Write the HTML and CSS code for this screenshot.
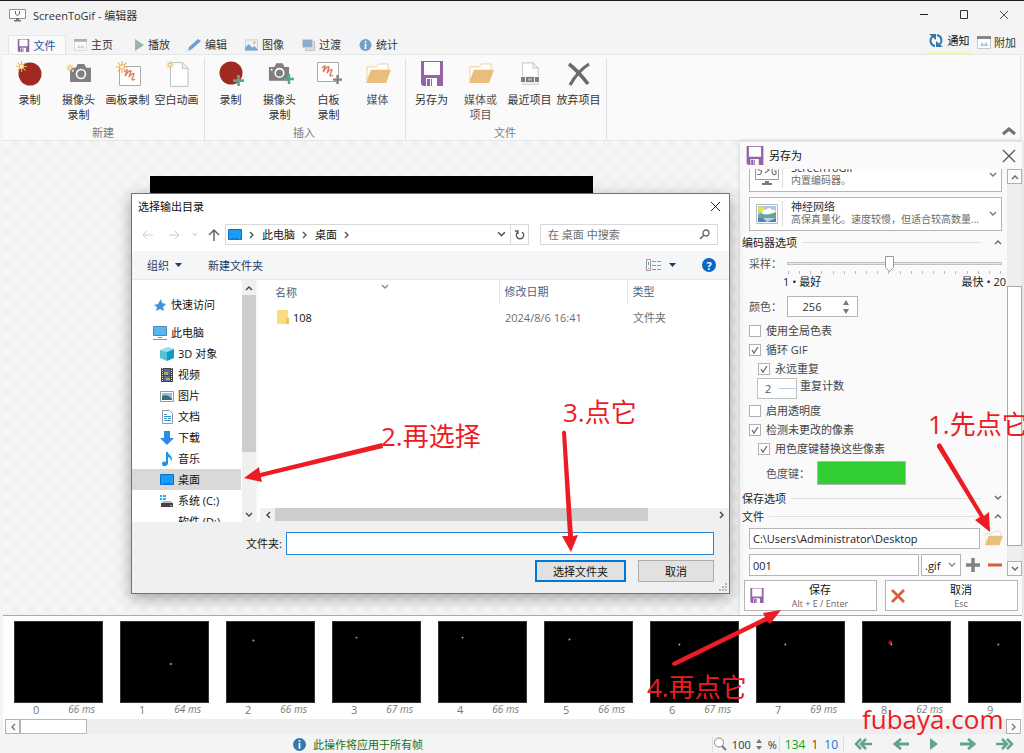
FILE: index.html
```html
<!DOCTYPE html>
<html lang="zh-CN">
<head>
<meta charset="utf-8">
<title>ScreenToGif - 编辑器</title>
<meta name="viewport" content="width=device-width, initial-scale=1">
<link rel="stylesheet" href="styles.css">
</head>
<body>
<svg class="defs" width="0" height="0" aria-hidden="true">
  <symbol id="floppy" viewBox="0 0 22 25"><path fill="#9263a9" d="M0 0h22v25H2l-2-2z"/><path fill="#fdfdfd" d="M3 1h16v13H3zM5 17h11v8H5z"/><path fill="#9263a9" d="M6 18h3v7H6zM10 18h1v7h-1z"/></symbol>
  <symbol id="rec" viewBox="0 0 28 28"><circle cx="14" cy="14" r="11.5" fill="#a02922"/></symbol>
  <symbol id="spark" viewBox="0 0 12 12"><g stroke="#e5b765" stroke-width="1.2"><path d="M6 0v12M0 6h12M1.7 1.7l8.6 8.6M10.3 1.7l-8.6 8.6"/></g><circle cx="6" cy="6" r="2.4" fill="#fff3cf" stroke="#e5b765"/></symbol>
  <symbol id="camera" viewBox="0 0 24 20"><path fill="#7f7f7f" d="M1 4h6l2-4h7l2 4h5v15H1z"/><circle cx="12.500" cy="10.500" r="4.700" fill="#7f7f7f" stroke="#fff" stroke-width="1.700"/><path fill="#fff" d="M3 6h2v2H3z"/></symbol>
  <symbol id="board" viewBox="0 0 22 20"><path fill="#fff" stroke="#aaa" d="M.5.5h21v19H.5z"/><path fill="none" stroke="#dc7458" stroke-width="1.300" d="M5 6q4-4 3-1L6 10q5-7 6-5l-2 6q4-5 5-3l-2 5q0 2 3 0"/></symbol>
  <symbol id="page" viewBox="0 0 20 26"><path fill="#fff" stroke="#bbb" d="M.5.5H13l6 6v19H.5zM13 .5v6h6"/></symbol>
  <symbol id="folder" viewBox="0 0 26 22"><path fill="#fff" stroke="#efcf9d" d="M1 18V4h10l2-3h10v6"/><path fill="#e9bd7c" d="M5 7h21l-5 14H0z"/></symbol>
  <symbol id="plus" viewBox="0 0 12 12"><path d="M6 0v12M0 6h12" stroke="currentColor" stroke-width="3"/></symbol>
  <symbol id="down" viewBox="0 0 8 6"><path d="M1 1l3 3 3-3" fill="none" stroke="currentColor" stroke-width="1.400"/></symbol>
  <symbol id="up" viewBox="0 0 8 6"><path d="M1 5l3-3 3 3" fill="none" stroke="currentColor" stroke-width="1.400"/></symbol>
  <symbol id="left" viewBox="0 0 6 8"><path d="M5 1L2 4l3 3" fill="none" stroke="currentColor" stroke-width="1.400"/></symbol>
  <symbol id="right" viewBox="0 0 6 8"><path d="M1 1l3 3-3 3" fill="none" stroke="currentColor" stroke-width="1.400"/></symbol>
  <symbol id="close" viewBox="0 0 12 12"><path d="M1 1l10 10M11 1L1 11" fill="none" stroke="currentColor"/></symbol>
  <symbol id="info" viewBox="0 0 12 12"><circle cx="6" cy="6" r="6" fill="currentColor"/><path fill="#fff" d="M5.200 2h1.600v1.600H5.200zM5.200 4.500h1.600V10H5.200z"/></symbol>
  <symbol id="desk" viewBox="0 0 14 12"><path fill="#1a9bf5" stroke="#0b72c4" d="M.5.5h13v10H.5z"/><path fill="#0a7ad8" d="M1 9h12v2H1z"/><path fill="#54bdff" d="M2 9h1v1H2zM11 9h1v1h-1z"/></symbol>
  <symbol id="arrow" viewBox="0 0 16 12"><path d="M0 6h13M8 1l6 5-6 5" fill="none" stroke="currentColor" stroke-width="2.800"/></symbol>
  <symbol id="photo" viewBox="0 0 14 12"><path fill="#eaf3fa" stroke="#ccc" d="M.5.5h13v11H.5z"/><path fill="#79a7d0" d="M0 9l4-4 4 4 2-2 4 4v1H0z"/><circle cx="10" cy="3.500" r="1.500" fill="#e8c06c"/></symbol>
  <symbol id="window" viewBox="0 0 14 13"><path fill="#fff" stroke="#c8c8c8" d="M.5.5h13v12H.5z"/><path fill="#848484" d="M0 0h14v3H0z"/><path fill="#a9cbe6" d="M3 10l2-4 2 3 2-3 3 4z"/></symbol>
</svg>

<div class="app">
  <header class="titlebar">
    <svg class="logo" width="17" height="13" viewBox="0 0 17 13"><path fill="#fff" stroke="#8d8d8d" d="M.5.5h16v9H.5z"/><path fill="none" stroke="#666" d="M6.500 2v3q2 3 4 0V2"/><path fill="#777" d="M7 9h3v2h2v1.500H5V11h2z"/></svg>
    <span class="app-name">ScreenToGif - 编辑器</span>
    <div class="window-buttons">
      <button aria-label="最小化"><svg width="10" height="10"><path d="M1 4.500h8" stroke="#222"/></svg></button>
      <button aria-label="最大化"><svg width="10" height="10"><path fill="none" stroke="#333" d="M1.500.5h7v8h-7z"/></svg></button>
      <button aria-label="关闭"><svg width="10" height="10"><use href="#close"/></svg></button>
    </div>
  </header>

  <nav class="tabs">
    <button class="tab active"><svg width="13" height="13"><use href="#floppy"/></svg>文件</button>
    <button class="tab"><svg width="13" height="12" opacity=".6"><use href="#window"/></svg>主页</button>
    <button class="tab"><svg width="13" height="12" viewBox="0 0 13 12"><path fill="#94b9a9" d="M4 0l9 6-9 6z"/></svg>播放</button>
    <button class="tab"><svg width="13" height="12" viewBox="0 0 13 12"><path fill="#72a0cb" d="M10 0l3 2-9 8-4 2 1-4z"/></svg>编辑</button>
    <button class="tab"><svg width="13" height="12"><use href="#photo"/></svg>图像</button>
    <button class="tab"><svg width="13" height="12" viewBox="0 0 13 12"><path fill="#dedede" stroke="#c2c2c2" d="M3.500 2.500h9v9h-9z"/><path fill="#8aaed1" stroke="#d2d2d2" d="M.5.5h10v8H.5z"/></svg>过渡</button>
    <button class="tab tab-info"><svg width="13" height="12"><use href="#info"/></svg>统计</button>
    <div class="tabs-extra">
      <button class="notice"><svg width="14" height="15" viewBox="0 0 14 15"><g fill="none" stroke="#3277b0" stroke-width="2"><path d="M6 13C1 12 0 6 4 3M8 2c5 1 6 7 2 10"/></g><path fill="#3277b0" d="M0 1h7v6zM14 14H7V8z"/></svg>通知</button>
      <button class="extras"><svg width="14" height="13"><use href="#window"/></svg>附加</button>
    </div>
  </nav>

  <section class="ribbon">
    <div class="group">
      <div class="items">
        <button class="item"><svg width="28" height="28" viewBox="0 0 28 28"><use href="#rec" width="28" height="28"/><use href="#spark" y="1" width="11" height="11"/></svg>录制</button>
        <button class="item"><svg width="28" height="28" viewBox="0 0 28 28"><use href="#camera" x="4" y="4" width="23" height="19"/><use href="#spark" x="1" y="4" width="8" height="8"/></svg>摄像头<br>录制</button>
        <button class="item"><svg width="28" height="28" viewBox="0 0 28 28"><use href="#board" x="5" y="6" width="22" height="20"/><use href="#spark" x="2" y="1" width="12" height="12"/></svg>画板录制</button>
        <button class="item"><svg width="28" height="28" viewBox="0 0 28 28"><use href="#page" x="7" y="2" width="19" height="25"/><use href="#spark" x="3" y="1" width="8" height="8"/></svg>空白动画</button>
      </div>
      <div class="group-name">新建</div>
    </div>
    <div class="group">
      <div class="items">
        <button class="item"><svg width="28" height="28" viewBox="0 0 28 28"><use href="#rec" y="-1" width="28" height="28"/><use class="green" href="#plus" x="16" y="15" width="11" height="11"/></svg>录制</button>
        <button class="item"><svg width="28" height="28" viewBox="0 0 28 28"><use href="#camera" x="2" y="3" width="22" height="19"/><use class="green" href="#plus" x="18" y="14" width="10" height="10"/></svg>摄像头<br>录制</button>
        <button class="item"><svg width="28" height="28" viewBox="0 0 28 28"><use href="#board" x="2" y="2" width="22" height="20"/><use class="gray" href="#plus" x="18" y="15" width="9" height="9"/></svg>白板<br>录制</button>
        <button class="item soft"><svg width="28" height="28" viewBox="0 0 28 28"><use href="#folder" x="2" y="3" width="25" height="21"/></svg>媒体</button>
      </div>
      <div class="group-name">插入</div>
    </div>
    <div class="group">
      <div class="items">
        <button class="item"><svg width="28" height="28" viewBox="0 0 28 28"><use href="#floppy" x="3" y="1" width="22" height="25"/></svg>另存为</button>
        <button class="item soft"><svg width="28" height="28" viewBox="0 0 28 28"><use href="#folder" x="2" y="3" width="25" height="21"/></svg>媒体或<br>项目</button>
        <button class="item"><svg width="28" height="28" viewBox="0 0 28 28"><use href="#page" x="6" y="1" width="17" height="25"/><path fill="#fafafa" d="M5 16h19v7H5z"/><path fill="#7d7d7d" d="M5 17h18v5H5z"/><path fill="#7d7d7d" stroke="#eee" d="M9.500 16.500h9v6h-9z"/><path fill="#bbb" d="M12 18.500h4v2h-4z"/></svg>最近项目</button>
        <button class="item"><svg width="28" height="28" viewBox="0 0 28 28"><path fill="none" stroke="#6b6b6b" stroke-width="3.500" d="M4 4q9 7 19 20"/><path fill="none" stroke="#6b6b6b" stroke-width="3.200" d="M24 4Q13 11 5 25"/></svg>放弃项目</button>
      </div>
      <div class="group-name">文件</div>
    </div>
    <button class="collapse" aria-label="折叠功能区"><svg width="14" height="10" viewBox="0 0 14 10"><path d="M1 8l6-5 6 5" fill="none" stroke="#727272" stroke-width="3"/></svg></button>
  </section>

  <main class="workspace">
    <div class="canvas"><div class="frame-view"></div></div>

    <aside class="panel">
      <div class="panel-head">
        <svg width="18" height="19"><use href="#floppy"/></svg><span>另存为</span>
        <button aria-label="关闭"><svg width="14" height="14" viewBox="0 0 14 14"><path d="M1 1l12 12M13 1L1 13" stroke="#555" stroke-width="1.300"/></svg></button>
      </div>
      <div class="panel-body">
        <div class="options">
          <button class="encoder" aria-haspopup="listbox">
            <svg width="26" height="26" viewBox="0 0 26 26"><path fill="#fff" stroke="#999" d="M1.500.5h23v17h-23z"/><path fill="none" stroke="#777" stroke-width="1.200" d="M9 4.500q-5-1-5 1.500t2.500 2.500-.5 4H3M11 5l4 3-4 3M23 5q-5-1-5 4t4 3V9h-2"/><path fill="#777" d="M11 19h4v2h3v2H8v-2h3z"/></svg>
            <span class="encoder-text"><b>ScreenToGif</b><small>内置编码器。</small></span>
            <svg class="chev" width="8" height="6"><use href="#down"/></svg>
          </button>
          <button class="encoder" aria-haspopup="listbox">
            <svg width="26" height="22" viewBox="0 0 26 22"><path fill="#fff" stroke="#bbb" d="M2.500 1.500h21v19h-21z"/><path fill="#a9c9e9" d="M4 3h18v9H4z"/><path fill="#fff" d="M8 10q0-4 4-3 3-4 6 0 4-1 4 4H8z"/><path fill="#6ea38e" d="M4 12q3-3 7 0l5-1 6-2v6H4z"/><path fill="#4e83bd" d="M4 15h18v4H4z"/><path fill="#b4d2ed" d="M9 15h13l-9 4z"/><circle cx="7" cy="6" r="2.700" fill="#e6ef19"/></svg>
            <span class="encoder-text"><b>神经网络</b><small>高保真量化。速度较慢，但适合较高数量...</small></span>
            <svg class="chev" width="8" height="6"><use href="#down"/></svg>
          </button>
          <h2 class="section">编码器选项<svg width="8" height="6"><use href="#up"/></svg></h2>
          <div class="sampling">
            <label for="sampling">采样：</label>
            <div class="slider">
              <input id="sampling" type="range" min="1" max="20" value="10">
              <div class="ticks"><i></i><i></i><i></i><i></i><i></i><i></i><i></i><i></i><i></i><i></i><i></i><i></i><i></i><i></i><i></i><i></i><i></i><i></i><i></i><i></i></div>
              <div class="ends"><span>1 • 最好</span><span>最快 • 20</span></div>
            </div>
          </div>
          <div class="colors">
            <label for="colors">颜色：</label>
            <span class="spinner"><input id="colors" type="text" value="256"><svg width="8" height="14" viewBox="0 0 8 14"><path fill="#7a7a7a" d="M1 5l3-5 3 5zM1 9h6l-3 5z"/></svg></span>
          </div>
          <div class="checks">
            <label><input type="checkbox">使用全局色表</label>
            <label><input type="checkbox" checked>循环 GIF</label>
            <label class="nested"><input type="checkbox" checked>永远重复</label>
          </div>
          <div class="repeat">
            <span class="repeat-box"><input id="repeat" type="text" value="2"></span>
            <label for="repeat">重复计数</label>
          </div>
          <div class="checks">
            <label><input type="checkbox">启用透明度</label>
            <label><input type="checkbox" checked>检测未更改的像素</label>
            <label class="nested"><input type="checkbox" checked>用色度键替换这些像素</label>
          </div>
          <div class="chroma"><span>色度键：</span><button aria-label="色度键颜色"></button></div>
          <h2 class="section">保存选项<svg width="8" height="6"><use href="#down"/></svg></h2>
          <h2 class="section">文件<svg width="8" height="6"><use href="#up"/></svg></h2>
          <div class="path-row">
            <input type="text" aria-label="输出目录" value="C:\Users\Administrator\Desktop">
            <button aria-label="选择输出目录"><svg width="18" height="15" viewBox="0 0 26 22"><use href="#folder" width="26" height="22"/></svg></button>
          </div>
          <div class="name-row">
            <input type="text" aria-label="文件名" value="001">
            <span class="ext"><select aria-label="扩展名"><option>.gif</option></select><svg width="8" height="6"><use href="#down"/></svg></span>
            <button class="gray" aria-label="增加"><svg width="14" height="14"><use href="#plus"/></svg></button>
            <button aria-label="减少"><svg width="14" height="14"><path d="M0 7h14" stroke="#d6603a" stroke-width="3"/></svg></button>
          </div>
        </div>
        <div class="vbar">
          <button aria-label="向上滚动"><svg width="8" height="6"><use href="#up"/></svg></button>
          <div class="vtrack"><div class="vthumb"></div></div>
          <button aria-label="向下滚动"><svg width="8" height="6"><use href="#down"/></svg></button>
        </div>
      </div>
      <div class="actions">
        <button><svg width="14" height="15"><use href="#floppy"/></svg><span>保存<small>Alt + E / Enter</small></span></button>
        <button><svg width="14" height="14" viewBox="0 0 14 14"><path d="M1 1l12 12M13 1L1 13" stroke="#d6603a" stroke-width="2.800"/></svg><span>取消<small>Esc</small></span></button>
      </div>
    </aside>
  </main>

  <section class="film">
    <div class="frames">
      <figure><div class="shot"></div><figcaption><span>0</span><i>66 ms</i></figcaption></figure>
      <figure><div class="shot"><svg viewBox="0 0 89 82"><circle cx="51" cy="43" r="1"/></svg></div><figcaption><span>1</span><i>64 ms</i></figcaption></figure>
      <figure><div class="shot"><svg viewBox="0 0 89 82"><circle cx="27" cy="19" r="1"/></svg></div><figcaption><span>2</span><i>66 ms</i></figcaption></figure>
      <figure><div class="shot"><svg viewBox="0 0 89 82"><circle cx="24" cy="16" r="1"/></svg></div><figcaption><span>3</span><i>67 ms</i></figcaption></figure>
      <figure><div class="shot"><svg viewBox="0 0 89 82"><circle cx="24" cy="16" r="1"/></svg></div><figcaption><span>4</span><i>66 ms</i></figcaption></figure>
      <figure><div class="shot"><svg viewBox="0 0 89 82"><circle cx="25" cy="18" r="1"/></svg></div><figcaption><span>5</span><i>66 ms</i></figcaption></figure>
      <figure><div class="shot"><svg viewBox="0 0 89 82"><circle cx="29" cy="23" r="1"/></svg></div><figcaption><span>6</span><i>67 ms</i></figcaption></figure>
      <figure><div class="shot"><svg viewBox="0 0 89 82"><circle cx="29" cy="23" r="1"/></svg></div><figcaption><span>7</span><i>69 ms</i></figcaption></figure>
      <figure><div class="shot"><svg viewBox="0 0 89 82"><circle class="click" cx="28" cy="21" r="2"/><circle cx="29" cy="23" r="1"/></svg></div><figcaption><span>8</span><i>62 ms</i></figcaption></figure>
      <figure><div class="shot"><svg viewBox="0 0 89 82"><circle cx="30" cy="23" r="1"/></svg></div><figcaption><span>9</span></figcaption></figure>
    </div>
    <div class="hbar">
      <button aria-label="向左滚动"><svg width="6" height="8"><use href="#left"/></svg></button>
      <div class="hthumb"></div>
      <button class="end" aria-label="向右滚动"><svg width="6" height="8"><use href="#right"/></svg></button>
    </div>
  </section>

  <footer class="status">
    <div class="message"><svg width="13" height="13"><use href="#info"/></svg>此操作将应用于所有帧</div>
    <div class="zoom"><svg width="14" height="14" viewBox="0 0 14 14"><circle cx="6" cy="5.500" r="4.500" fill="#fff" stroke="#888"/><path d="M9 9l4 4" stroke="#777" stroke-width="2"/></svg><input type="text" aria-label="缩放" value="100"><svg width="6" height="12" viewBox="0 0 6 12"><path fill="#777" d="M0 5l3-4 3 4zM0 8h6l-3 4z"/></svg><span>%</span></div>
    <div class="counts"><span class="c-all">134</span><span class="c-sel">1</span><span class="c-cur">10</span></div>
    <div class="player">
      <button aria-label="第一帧"><svg width="18" height="12" viewBox="0 0 18 12"><path d="M7 1L2 6l5 5M12 1L7 6l5 5M7 6h11" fill="none" stroke="currentColor" stroke-width="2.500"/></svg></button>
      <button aria-label="上一帧"><svg class="flip" width="16" height="12"><use href="#arrow"/></svg></button>
      <button aria-label="播放"><svg width="10" height="12"><path fill="currentColor" d="M1 0l8 6-8 6z"/></svg></button>
      <button aria-label="下一帧"><svg width="16" height="12"><use href="#arrow"/></svg></button>
      <button aria-label="最后一帧"><svg class="flip" width="18" height="12" viewBox="0 0 18 12"><path d="M7 1L2 6l5 5M12 1L7 6l5 5M7 6h11" fill="none" stroke="currentColor" stroke-width="2.500"/></svg></button>
    </div>
  </footer>

  <div class="dialog" role="dialog" aria-label="选择输出目录">
    <div class="dlg-title"><span>选择输出目录</span><button aria-label="关闭"><svg width="11" height="11"><use href="#close"/></svg></button></div>
    <div class="dlg-nav">
      <div class="history">
        <button aria-label="后退"><svg width="12" height="10"><path d="M11 5H1M5 1L1 5l4 4" fill="none" stroke="#ccc"/></svg></button>
        <button aria-label="前进"><svg width="12" height="10"><path d="M1 5h10M7 1l4 4-4 4" fill="none" stroke="#ccc"/></svg></button>
        <button aria-label="最近位置"><svg width="6" height="5" viewBox="0 0 8 6" color="#ccc"><use href="#down"/></svg></button>
        <button aria-label="上移"><svg width="12" height="12"><path d="M6 12V2M1 6l5-5 5 5" fill="none" stroke="#666" stroke-width="1.500"/></svg></button>
      </div>
      <div class="address">
        <svg width="14" height="12"><use href="#desk"/></svg>
        <svg width="6" height="8"><use href="#right"/></svg><a href="#pc">此电脑</a>
        <svg width="6" height="8"><use href="#right"/></svg><a href="#desktop">桌面</a>
        <svg width="6" height="8"><use href="#right"/></svg>
        <button class="drop" aria-label="历史记录"><svg width="9" height="7"><use href="#down"/></svg></button>
        <button class="refresh" aria-label="刷新"><svg width="10" height="10" viewBox="0 0 10 10"><path d="M7 2a3.700 3.700 0 1 1-4 0M3 4V1H0" fill="none" stroke="#555" stroke-width="1.300"/></svg></button>
      </div>
      <div class="search"><input type="text" aria-label="搜索" placeholder="在 桌面 中搜索"><svg width="11" height="11"><circle cx="7" cy="4" r="3" fill="none" stroke="#666" stroke-width="1.300"/><path d="M5 6l-4 4" stroke="#666" stroke-width="1.600"/></svg></div>
    </div>
    <div class="dlg-tools">
      <button>组织<svg width="7" height="4"><path fill="#1e3a66" d="M0 0h7L3.500 4z"/></svg></button>
      <button>新建文件夹</button>
      <div class="views">
        <button aria-label="视图"><svg width="15" height="12" viewBox="0 0 15 12"><path fill="none" stroke="#999" d="M.5.5h4v11h-4z"/><path stroke="#8c9bb0" stroke-dasharray="4 1" d="M6 2.500h9M6 6.500h9M6 10.500h9"/><path fill="#c77" d="M2 9h1v1H2z"/><path fill="#69c" d="M2 3h1v3H2z"/></svg></button>
        <button aria-label="更多视图"><svg width="7" height="4"><path fill="#1e3a66" d="M0 0h7L3.500 4z"/></svg></button>
        <button class="help" aria-label="帮助">?</button>
      </div>
    </div>
    <div class="dlg-body">
      <ul class="tree">
        <li class="root"><svg width="14" height="14" viewBox="0 0 14 14"><path fill="#3a95de" d="M8 1l1 4 4 1-3 3 1 4-4-2-4 2 1-4-3-2 4-1z"/></svg>快速访问</li>
        <li class="root pc"><svg width="14" height="14" viewBox="0 0 14 14"><path fill="#58b7f0" stroke="#5287ad" d="M.5.5h13v9H.5z"/><path stroke="#7e9cb3" d="M5 11.500h4M0 13.500h14"/></svg>此电脑</li>
        <li><svg width="14" height="14" viewBox="0 0 14 14"><path fill="#8ee0ec" d="M0 3l8-3 6 2-7 3z"/><path fill="#4fc1d8" d="M0 3l7 2v9l-7-3z"/><path fill="#159bc2" d="M7 5l7-3v9l-7 3z"/></svg>3D 对象</li>
        <li><svg width="14" height="14" viewBox="0 0 14 14"><path fill="#444" d="M1 0h12v14H1z"/><path fill="#4470b8" d="M4 1h6v6H4zM4 8h6v5H4z"/><path fill="#d6a13d" d="M4 4h4v3H4zM6 10h4v2H6z"/><path stroke="#ddd" stroke-dasharray="1 1" d="M2.500 0v14M11.500 0v14"/></svg>视频</li>
        <li><svg width="14" height="14" viewBox="0 0 14 14"><path fill="#fff" stroke="#999" d="M.5 2.500h13v10H.5z"/><path fill="#86c4ee" d="M2 4h10v4H2z"/><path fill="#3b6f78" d="M2 7l4-1 6 3v2H2z"/></svg>图片</li>
        <li><svg width="14" height="14" viewBox="0 0 14 14"><path fill="#fff" stroke="#999" d="M2.500.5h7l3 3v10h-10z"/><path stroke="#3c94c9" d="M4 4.500h3M4 6.500h7M4 8.500h3M8 8.500h3M4 10.500h7"/></svg>文档</li>
        <li><svg width="14" height="14" viewBox="0 0 14 14"><path fill="#2f8be0" d="M4 0h6v7h4l-7 7-7-7h4z"/></svg>下载</li>
        <li><svg width="14" height="14" viewBox="0 0 14 14"><path fill="#1c95ed" d="M6 0h2c0 3 4 3 4 7 0 1-1 2-1 2 0-3-2-4-3-4v6c0 4-6 4-6 1 0-2 2-3 4-2z"/></svg>音乐</li>
        <li class="selected"><svg width="14" height="12"><use href="#desk"/></svg>桌面</li>
        <li><svg width="14" height="14" viewBox="0 0 14 14"><path fill="#25b3ee" d="M0 1h2v2H0zM3 1h3v2H3zM0 4h2v2H0zM3 4h3v2H3z"/><path fill="#bbb" d="M3 7h8l2 3H1z"/><path fill="#444" d="M1 9h12v4H1z"/><path fill="#5fdc68" d="M10 11h2v1h-2z"/></svg>系统 (C:)</li>
        <li><svg width="14" height="14"></svg>软件 (D:)</li>
      </ul>
      <div class="tree-bar">
        <button aria-label="向上滚动"><svg width="8" height="6"><use href="#up"/></svg></button>
        <div class="tree-track"><div class="tree-thumb"></div></div>
        <button aria-label="向下滚动"><svg width="8" height="6"><use href="#down"/></svg></button>
      </div>
      <div class="files">
        <table>
          <thead><tr><th class="col-name"><span>名称</span><svg width="8" height="6"><use href="#down"/></svg></th><th class="col-date">修改日期</th><th>类型</th></tr></thead>
          <tbody><tr><td class="name"><svg width="12" height="14" viewBox="0 0 12 14"><path fill="#fbdc80" d="M0 0h11v14H0z"/><path fill="#eac35a" d="M9 8h3v6H9z"/></svg>108</td><td>2024/8/6 16:41</td><td>文件夹</td></tr></tbody>
        </table>
        <div class="files-bar">
          <button aria-label="向左滚动"><svg width="6" height="8"><use href="#left"/></svg></button>
          <div class="files-track"><div class="files-thumb"></div></div>
          <button aria-label="向右滚动"><svg width="6" height="8"><use href="#right"/></svg></button>
        </div>
      </div>
    </div>
    <div class="dlg-foot">
      <div class="folder-row"><label for="folder-name">文件夹:</label><input id="folder-name" type="text"></div>
      <div class="dlg-actions"><button class="primary">选择文件夹</button><button>取消</button></div>
      <svg class="grip" width="8" height="8"><path fill="#b5b5b5" d="M6 0h2v2H6zM3 3h2v2H3zM6 3h2v2H6zM0 6h2v2H0zM3 6h2v2H3zM6 6h2v2H6z"/></svg>
    </div>
  </div>

  <div class="notes">
    <svg width="1024" height="753" viewBox="0 0 1024 753" fill="#ed1c24">
      <path d="M937 445q2-3 4-1l43 72 5-4 1 20-15-12 5-3-43-70z"/>
      <path d="M382 443l1 5-122 29 1 5-18-4 15-11 1 6z"/>
      <path d="M562 432q2-3 4 0l7 104 5-1-7 17-9-16 6 0z"/>
      <path d="M673 662l92-45-2-4 18-3-11 14-3-3-92 45q-5-1-2-4z"/>
    </svg>
    <span class="note n1">1.先点它</span>
    <span class="note n2">2.再选择</span>
    <span class="note n3">3.点它</span>
    <span class="note n4">4.再点它</span>
    <span class="note mark">fubaya.com</span>
  </div>
</div>
</body>
</html>
```
FILE: styles.css
```css
* { box-sizing: border-box; }
body {
  margin: 0;
  font: 11px/15px "Open Sans", "Noto Sans CJK SC", sans-serif;
  color: #333;
}
button, input, select { font: inherit; color: inherit; margin: 0; padding: 0; border-radius: 0; outline: 0; }
button { background: none; border: 0; display: flex; align-items: center; justify-content: center; }
input[type="text"] { min-width: 0; border: 0; background: none; }
svg { display: block; flex: none; }
ul, figure, h2 { margin: 0; padding: 0; list-style: none; font: inherit; }
.defs { position: absolute; }
.green { color: #5fa58b; }
.gray { color: #828282; }

.app {
  position: relative;
  display: flex;
  flex-direction: column;
  height: 100vh;
  overflow: hidden;
  background: #f4f4f4;
  border-top: 1px solid #1c1a20;
}

/* Title bar */
.titlebar { display: flex; align-items: center; height: 28px; padding: 0 0 0 9px; }
.app-name { margin-left: 7px; flex: 1; }
.window-buttons { display: flex; }
.window-buttons button { width: 40px; height: 28px; }

/* Tabs */
.tabs { display: flex; align-items: flex-end; height: 25px; padding-left: 8px; }
.tab { gap: 4px; width: 57px; height: 19px; border: 1px solid transparent; padding-right: 2px; }
.tab.active { width: 58px; height: 20px; margin-bottom: -1px; background: #fafafa; border-color: #e0e5e5; border-bottom: 0; color: #2b4ea0; }
.tab-info { color: #333; }
.tab-info svg { color: #72a0cb; }
.tabs-extra { display: flex; align-items: flex-end; margin-left: auto; padding-right: 8px; gap: 6px; }
.notice { gap: 5px; height: 25px; width: 44px; color: #111; border-bottom: 2px solid #fbf3a6; }
.extras { gap: 3px; height: 23px; }

/* Ribbon */
.ribbon { display: flex; margin: 0 3px; padding: 3px 0 0 1px; background: #fafafa; border: 1px solid #e2e8e8; border-width: 1px 1px 1px 0; }
.group { padding: 0 3px 0 1px; border-right: 1px solid #e0e0e0; }
.items { display: flex; height: 67px; }
.item { width: 49px; flex-direction: column; justify-content: flex-start; padding-top: 2px; white-space: nowrap; color: #333; }
.item svg { margin-bottom: 4px; }
.item.soft { color: #555; }
.group-name { text-align: center; color: #7a7a7a; }
.collapse { margin: auto 4px 4px auto; }

/* Workspace */
.workspace { flex: 1; display: flex; min-height: 0; margin: 0 2px 0 3px; }
.canvas {
  flex: 1;
  display: flex;
  align-items: center;
  justify-content: center;
  background: repeating-conic-gradient(#f1f1f1 0 25%, #f6f6f6 0 50%) 0 0 / 16px 16px;
}
.frame-view { width: 60%; aspect-ratio: 444 / 406; background: #000; }
.panel { width: 282px; display: flex; flex-direction: column; background: #fafafa; border-top: 1px solid #e6e6e6; box-shadow: 0 0 4px #ccc; }
.panel-head { display: flex; align-items: center; gap: 5px; height: 27px; padding: 0 6px; color: #111; }
.panel-head button { margin-left: auto; }
.panel-body { flex: 1; min-height: 0; display: flex; }
.options { flex: 1; min-width: 0; overflow: hidden; display: flex; flex-direction: column; justify-content: flex-end; padding: 0 5px 0 9px; }
.options > * { flex: none; }
.encoder { height: 34px; margin-bottom: 5px; padding: 0 4px; background: #fff; border: 1px solid #b5b5b5; justify-content: flex-start; text-align: left; }
.encoder + .encoder { margin-bottom: 2px; }
.encoder-text { flex: 1; min-width: 0; display: flex; flex-direction: column; margin-left: 2px; padding: 0 0 2px 8px; border-left: 1px solid #ddd; line-height: 12px; }
.encoder-text b { font-weight: normal; color: #333; }
.encoder-text small { font-size: 10px; color: #6c6c6c; white-space: nowrap; }
.chev { color: #777; }
.section { display: flex; align-items: center; gap: 5px; height: 18px; margin-left: -7px; color: #222; }
.section::after { content: ""; flex: 1; height: 1px; background: #e0e0e0; }
.section svg { order: 1; margin: 0 0 0 8px; color: #666; }
.sampling { display: flex; gap: 6px; height: 45px; padding-top: 4px; line-height: 17px; }
.sampling label, .colors label { width: 32px; white-space: nowrap; color: #555; }
.slider { flex: 1; min-width: 0; }
.slider input { display: block; width: 100%; height: 16px; appearance: none; background: none; }
.slider input::-webkit-slider-runnable-track { height: 3px; background: #e8e8e8; border: 1px solid #c2c2c2; }
.slider input::-webkit-slider-thumb { appearance: none; width: 9px; height: 16px; margin-top: -7px; background: url("data:image/svg+xml,%3Csvg xmlns='http://www.w3.org/2000/svg' width='9' height='16'%3E%3Cpath d='M.5.5h8v11l-4 4-4-4z' fill='%23fff' stroke='%23999'/%3E%3C/svg%3E"); }
.ticks { display: flex; justify-content: space-between; padding: 0 1px; }
.ticks i { width: 1px; height: 3px; background: #bbb; }
.ends { display: flex; justify-content: space-between; margin: 0 -4px; line-height: 15px; color: #222; }
.colors { display: flex; align-items: center; gap: 6px; margin-bottom: 4px; }
.spinner { display: flex; align-items: center; width: 71px; height: 21px; padding-right: 7px; background: #fff; border: 1px solid #b5b5b5; }
.spinner input { flex: 1; width: 0; text-align: center; padding-right: 6px; }
.checks label { display: flex; align-items: center; gap: 5px; height: 19px; color: #444; }
.checks .nested { margin-left: 9px; }
.checks input { appearance: none; width: 12px; height: 12px; background: #fff; border: 1px solid #b0b0b0; }
.checks input:checked { background: #fff url("data:image/svg+xml,%3Csvg xmlns='http://www.w3.org/2000/svg' width='10' height='10'%3E%3Cpath d='M2 5l2 3 4-6' fill='none' stroke='%23666' stroke-width='1.300'/%3E%3C/svg%3E"); }
.repeat { display: flex; gap: 3px; margin: 0 0 2px 8px; color: #444; }
.repeat-box { width: 40px; height: 21px; padding: 0 0 0 7px; display: flex; align-items: center; background: #fff; border: 1px solid #c0c0c0; color: #555; }
.repeat-box input { width: 14px; }
.repeat-box::after { content: ""; flex: 1; height: 1px; background: #b7cdec; }
.chroma { display: flex; align-items: center; margin: 3px 0 4px 17px; color: #555; }
.chroma span { width: 51px; }
.chroma button { width: 89px; height: 24px; background: #32cd32; border: 1px solid #b5b5b5; }
.path-row, .name-row { display: flex; align-items: center; gap: 5px; color: #222; }
.path-row { margin: 3px -1px 5px 0; }
.path-row input, .name-row input { flex: 1; height: 21px; padding: 0 3px; background: #fff; border: 1px solid #b5b5b5; }
.name-row { gap: 2px; margin-right: -3px; }
.name-row input { height: 22px; }
.name-row button { width: 20px; }
.ext { display: grid; align-items: center; width: 40px; height: 22px; background: #fff; border: 1px solid #b5b5b5; }
.ext > * { grid-area: 1 / 1; }
.ext select { appearance: none; width: 100%; height: 100%; padding-left: 3px; border: 0; background: none; }
.ext svg { justify-self: end; margin-right: 4px; color: #888; }
.vbar { width: 15px; display: flex; flex-direction: column; background: #eee; }
.vbar button { height: 15px; border: 1px solid #b0b0b0; background: #fafafa; color: #666; }
.vtrack { flex: 1; display: grid; grid-template-rows: 103fr 262fr 15fr; }
.vthumb { grid-row: 2; background: #fff; border: 1px solid #aaa; }
.actions { display: grid; grid-template-columns: 1fr 1fr; gap: 8px; padding: 4px; }
.actions button { height: 31px; padding-left: 5px; background: #fff; border: 1px solid #b5b5b5; color: #111; }
.actions span { flex: 1; display: flex; flex-direction: column; line-height: 15px; }
.actions small { font-size: 9px; line-height: 13px; color: #666; }

/* Frame list */
.film { margin: 0 2px 0 3px; padding-top: 5px; background: #fff; border-top: 1px solid #a8a8a8; }
.frames { display: flex; gap: 17px; margin: 0 1px 0 11px; overflow: hidden; }
.frames figure { flex: none; width: 89px; }
.shot { height: 82px; background: #000; border: 1px solid #333; }
.shot svg { width: 100%; height: 100%; fill: #aaa; }
.shot .click { fill: #b41212; }
.frames figcaption { display: flex; justify-content: space-between; padding: 0 8px 0 19px; line-height: 13px; color: #777; }
.frames i { font-size: 10px; line-height: 12px; }
.hbar { display: flex; height: 15px; margin: 3px 1px 0 2px; background: #eee; }
.hbar button { width: 15px; border: 1px solid #b0b0b0; background: #fafafa; color: #777; }
.hbar .end { margin-left: auto; }
.hthumb { width: 67px; background: #fff; border: 1px solid #b8b8b8; }

/* Status bar */
.status { display: flex; align-items: center; height: 18px; margin-top: 1px; }
.message { flex: 1; display: flex; align-items: center; justify-content: center; gap: 7px; padding-left: 4px; color: #14711a; }
.message svg { color: #3277b0; }
.zoom { display: flex; align-items: center; gap: 2px; width: 67px; border-left: 1px solid #ddd; }
.zoom input { width: 25px; font-size: 11px; text-align: center; }
.zoom span { margin-left: 4px; }
.counts { display: flex; gap: 6px; padding: 0 5px; border: 1px solid #ddd; border-width: 0 1px; font-size: 12px; }
.c-all { color: #12a012; }
.c-sel { color: #d02020; }
.c-cur { color: #1c74cc; }
.player { display: flex; justify-content: space-between; width: 160px; margin: 0 10px; color: #5fa58b; }
.flip { transform: scaleX(-1); }

/* Folder dialog, floating above the editor */
.dialog { position: absolute; left: 131px; top: 192px; width: 599px; background: #fff; border: 1px solid #737373; box-shadow: 0 4px 14px rgba(0, 0, 0, .35); color: #111; }
.dlg-title { display: flex; align-items: center; justify-content: space-between; height: 24px; padding: 0 8px 0 6px; }
.dlg-nav { display: flex; align-items: center; height: 33px; padding: 0 11px 0 10px; }
.history { display: flex; align-items: center; gap: 14px; width: 83px; }
.history button:nth-child(n+3) { margin-left: -2px; }
.history button:nth-child(4) { margin-left: -4px; }
.address { flex: 1; display: flex; align-items: center; gap: 7px; height: 21px; margin-right: 11px; padding-left: 2px; border: 1px solid #d9d9d9; color: #555; }
.address a { color: #111; text-decoration: none; }
.address button { height: 100%; }
.drop { margin-left: auto; }
.refresh { width: 18px; margin-left: -3px; border-left: 1px solid #d9d9d9; }
.search { display: flex; align-items: center; width: 178px; height: 21px; padding: 0 7px; border: 1px solid #d9d9d9; }
.search input { flex: 1; }
.search input::placeholder { color: #6d6d6d; opacity: 1; }
.dlg-tools { display: flex; align-items: center; gap: 26px; height: 29px; padding: 0 13px 0 15px; background: #f5f6f8; border-bottom: 1px solid #e6e8ec; color: #1e3a66; }
.dlg-tools button { gap: 6px; }
.views { display: flex; align-items: center; gap: 8px; margin-left: auto; }
.dlg-tools .help { width: 14px; height: 14px; margin-left: 18px; border-radius: 50%; background: #0a65c4; color: #fff; font-weight: bold; }
.dlg-body { display: flex; height: 242px; }
.tree { width: 109px; padding-top: 14px; overflow: hidden; }
.tree li { display: flex; align-items: center; gap: 4px; height: 21px; padding-left: 28px; white-space: nowrap; }
.tree .root { padding-left: 21px; }
.tree .pc { margin-top: 7px; }
.tree .selected { background: #d9d9d9; }
.tree-bar { display: flex; flex-direction: column; width: 16px; border-right: 2px solid #f7f7f7; margin-left: 1px; background: #f0f0f0; color: #444; }
.tree-bar button { height: 15px; }
.tree-track { flex: 1; }
.tree-thumb { height: 74%; background: #cdcdcd; }
.files { flex: 1; min-width: 0; display: flex; flex-direction: column; }
.files table { border-collapse: collapse; table-layout: fixed; width: 100%; }
.files th { height: 23px; padding: 0 0 0 5px; font-weight: normal; text-align: left; color: #4c607a; border-left: 1px solid #e5e5e5; }
.files .col-name { width: 241px; padding-left: 17px; border: 0; }
.col-name span { display: inline-block; width: 106px; }
.col-name svg { display: inline-block; vertical-align: 7px; color: #888; }
.col-date { width: 128px; }
.files td { height: 28px; padding: 0 0 0 6px; color: #6d6d6d; }
.files .name { display: flex; align-items: center; gap: 4px; padding-left: 19px; color: #111; }
.files-bar { display: flex; height: 14px; margin: auto 0 0 2px; background: #f0f0f0; color: #444; }
.files-bar button { width: 15px; }
.files-track { flex: 1; }
.files-thumb { width: 85%; height: 13px; background: #cdcdcd; }
.dlg-foot { position: relative; padding: 10px 15px 11px 114px; background: #f0f0f0; }
.folder-row { display: flex; align-items: center; gap: 4px; }
.folder-row input { flex: 1; height: 23px; padding: 0 4px; background: #fff; border: 1px solid #2b84d0; }
.dlg-actions { display: flex; justify-content: flex-end; gap: 12px; margin-top: 5px; }
.dlg-actions button { width: 76px; height: 22px; background: #e1e1e1; border: 1px solid #adadad; }
.dlg-actions .primary { width: 91px; border: 2px solid #0078d7; }
.grip { position: absolute; right: 2px; bottom: 2px; }

/* Red guide marks drawn over everything */
.notes { position: absolute; inset: -1px 0 0; overflow: hidden; pointer-events: none; }
.note { position: absolute; font-size: 26px; line-height: 30px; color: #ed1c24; white-space: nowrap; }
.n1 { left: 928px; top: 409px; }
.n2 { left: 381px; top: 421px; }
.n3 { left: 563px; top: 397px; }
.n4 { left: 647px; top: 672px; }
.mark { left: 862px; top: 704px; }
```
